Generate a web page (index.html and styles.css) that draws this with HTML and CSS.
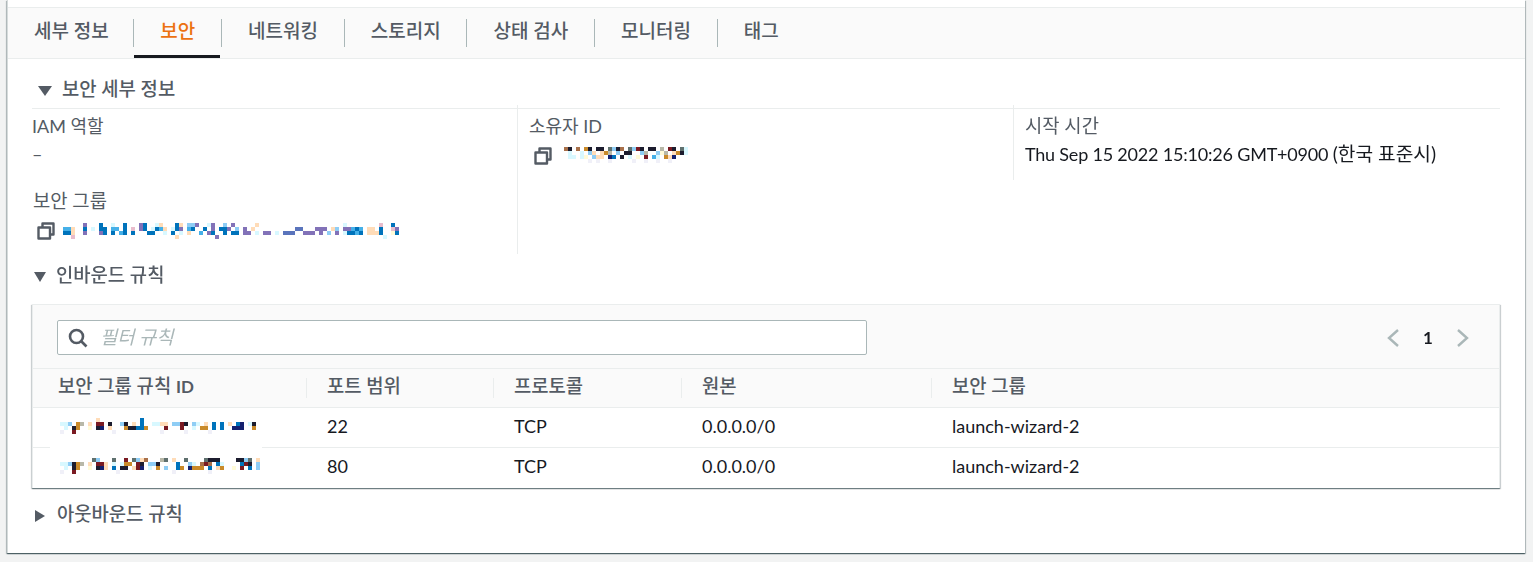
FILE: index.html
```html
<!DOCTYPE html>
<html lang="ko">
<head>
  <meta charset="UTF-8" />
  <title>보안</title>
  <link rel="stylesheet" href="styles.css">
</head>
<body>
  <div class="card">
    <div class="tabs">
      <a class="tab">세부 정보</a>
      <a class="tab active">보안</a>
      <a class="tab">네트워킹</a>
      <a class="tab">스토리지</a>
      <a class="tab">상태 검사</a>
      <a class="tab">모니터링</a>
      <a class="tab">태그</a>
    </div>

    <div class="content">
      <h3 class="section-title first"><span class="arrow down"></span>보안 세부 정보</h3>

      <div class="details">
        <div class="col">
          <div class="label">IAM 역할</div>
          <div class="value dash">–</div>
          <div class="label ko second">보안 그룹</div>
          <div class="value copy-row">
            <svg class="copy" viewBox="0 0 18 18"><path d="M5.5 4.5V1.5h11v11h-3M1.5 5.5h11.500v11h-11.500z"/></svg>
            <canvas class="mosaic" id="sgBlob"></canvas>
          </div>
        </div>
        <div class="col short-divider">
          <div class="label">소유자 ID</div>
          <div class="value copy-row">
            <svg class="copy" viewBox="0 0 18 18"><path d="M5.500 4.500V1.500h11v11h-3M1.500 5.500h11.500v11h-11.500z"/></svg>
            <canvas class="mosaic" id="ownerBlob"></canvas>
          </div>
        </div>
        <div class="col last">
          <div class="label ko">시작 시간</div>
          <div class="value date">Thu Sep 15 2022 15:10:26 GMT+0900 <span class="tz">(한국 표준시)</span></div>
        </div>
      </div>

      <h3 class="section-title inbound"><span class="arrow down"></span>인바운드 규칙</h3>

      <div class="rules">
        <div class="rules-top">
          <div class="filter">
            <svg class="search" viewBox="0 0 20 20"><circle cx="8.5" cy="8.500" r="6.500"/><path d="M13.500 13.500l5 5"/></svg>
            <span class="placeholder">필터 규칙</span>
          </div>
          <div class="pager">
            <svg viewBox="0 0 14 20"><path d="M12 2L3 10l9 8"/></svg>
            <span class="page-num">1</span>
            <svg viewBox="0 0 14 20"><path d="M2 2l9 8-9 8"/></svg>
          </div>
        </div>
        <table>
          <thead>
            <tr>
              <th class="c1"><span>보안 그룹 규칙 <small>ID</small></span></th>
              <th class="c2"><span>포트 범위</span></th>
              <th class="c3"><span>프로토콜</span></th>
              <th class="c4"><span>원본</span></th>
              <th><span>보안 그룹</span></th>
            </tr>
          </thead>
          <tbody>
            <tr>
              <td class="id-cell"><canvas class="mosaic" id="ruleBlob1"></canvas></td>
              <td>22</td>
              <td>TCP</td>
              <td>0.0.0.0/0</td>
              <td>launch-wizard-2</td>
            </tr>
            <tr>
              <td><canvas class="mosaic" id="ruleBlob2"></canvas></td>
              <td>80</td>
              <td>TCP</td>
              <td>0.0.0.0/0</td>
              <td>launch-wizard-2</td>
            </tr>
          </tbody>
        </table>
      </div>

      <h3 class="section-title outbound"><span class="arrow right"></span>아웃바운드 규칙</h3>
    </div>
  </div>

  <script src="script.js"></script>
</body>
</html>
```

FILE: styles.css
```css
* {
  box-sizing: border-box;
}

html, body {
  height: 562px;
  overflow: hidden;
}

body {
  margin: 0;
  padding: 0 8px 0 7px;
  background-color: #f2f3f3;
  font-family: Lato, "Noto Sans CJK KR", sans-serif;
  font-size: 18px;
  color: #16191f;
}

.card {
  height: 553px;
  padding-top: 7px;
  background-color: white;
  border-left: 1px solid #d5dbdb;
  box-shadow: 0 1px 1px 0 rgba(0,28,36,0.5), 1px 1px 1px 0 rgba(0,28,36,0.2), -1px 1px 1px 0 rgba(0,28,36,0.2);
}

.tabs {
  display: flex;
  height: 52px;
  background-color: #fafafa;
  border-top: 1px solid #eaeded;
  border-bottom: 1px solid #eaeded;
}

.tab {
  position: relative;
  padding: 11px 25.8px 0 27px;
  font-size: 19px;
  font-weight: 500;
  line-height: 24px;
  color: #545b64;
}

.tab:first-child {
  padding: 11px 24.5px 0 26px;
}

.tab:not(:last-child)::after {
  content: "";
  position: absolute;
  right: -1px;
  top: 11px;
  height: 28px;
  width: 1px;
  background-color: #aab7b8;
}

.tab.active {
  color: #ec7211;
}

.tab.active::before {
  content: "";
  position: absolute;
  left: 1px;
  right: 1px;
  bottom: 0;
  height: 3px;
  background-color: #16191f;
}

.content {
  padding: 0 25px 0 24px;
}

.section-title {
  display: flex;
  align-items: center;
  margin: 0;
  font-size: 18.8px;
  font-weight: 500;
  line-height: 24px;
  color: #545b64;
}

.section-title.first {
  margin-top: 18px;
  padding-bottom: 7px;
  padding-left: 6px;
  border-bottom: 1px solid #eaeded;
}

.section-title.inbound {
  margin-top: 8px;
  padding-left: 2px;
}

.section-title.outbound {
  margin-top: 14px;
  padding-left: 3px;
}

.arrow {
  width: 0;
  height: 0;
  margin-right: 10px;
}

.arrow.down {
  border-left: 7px solid transparent;
  border-right: 7px solid transparent;
  border-top: 10px solid #545b64;
  margin-top: 4px;
}

.inbound .arrow.down {
  border-left-width: 6.5px;
  border-right-width: 6.5px;
}

.arrow.right {
  border-top: 6.5px solid transparent;
  border-bottom: 6.5px solid transparent;
  border-left: 10px solid #545b64;
  margin-right: 12px;
  margin-top: 4px;
}

.details {
  display: grid;
  grid-template-columns: 486px 496px 1fr;
  height: 146px;
}

.col {
  border-right: 1px solid #eaeded;
  margin: -4px 0 1px;
  padding-top: 9px;
}

.col.short-divider {
  height: 75px;
  padding-left: 11px;
}

.col.last {
  border-right: none;
  padding-left: 11px;
}

.label {
  line-height: 24px;
  color: #545b64;
}

.label.ko {
  font-size: 18.8px;
  padding-left: 1px;
}

.col.last .label.ko {
  padding-left: 0;
}

.value {
  margin-top: 4px;
  line-height: 24px;
}

.value.date {
  letter-spacing: -0.2px;
}

.tz {
  font-size: 19.2px;
  letter-spacing: 0;
}

.value.dash {
  color: #545b64;
  height: 27px;
}

.label.second {
  margin-top: 20px;
}

.value.copy-row {
  display: flex;
  align-items: flex-start;
  height: 24px;
  margin-top: 5px;
  padding-left: 5px;
}

.copy {
  width: 18px;
  height: 18px;
  margin-top: 4px;
  fill: none;
  stroke: #545b64;
  stroke-width: 2.4;
  stroke-linejoin: round;
}

.mosaic {
  display: block;
}

#sgBlob {
  margin: 5px 0 0 4px;
}

#ownerBlob {
  margin: 4px 0 0 12px;
}

.rules {
  width: 1468px;
  height: 184px;
  margin-top: 17px;
  background-color: white;
  border: 1px solid #eaeded;
  border-bottom: none;
  box-shadow: 0 1px 1px 0 rgba(0,28,36,0.4), 1px 1px 1px 0 rgba(0,28,36,0.15), -1px 1px 1px 0 rgba(0,28,36,0.15);
}

.rules-top {
  display: flex;
  justify-content: space-between;
  height: 63px;
  padding: 15px 29px 0 24px;
  background-color: #fafafa;
}

.filter {
  display: flex;
  align-items: center;
  width: 810px;
  height: 35px;
  background-color: white;
  border: 1px solid #aab7b8;
  border-radius: 2px;
}

.search {
  width: 20px;
  height: 20px;
  margin-left: 10px;
  fill: none;
  stroke: #545b64;
  stroke-width: 2.6;
}

.placeholder {
  margin: -4px 0 0 12px;
  font-size: 18.8px;
  font-style: italic;
  color: #aab7b8;
}

.pager {
  display: flex;
  align-items: center;
  height: 35px;
}

.pager svg {
  width: 14px;
  height: 20px;
  fill: none;
  stroke: #aab7b8;
  stroke-width: 2.4;
}

.page-num {
  width: 56px;
  text-align: center;
  font-size: 17px;
  font-weight: 700;
}

table {
  width: 100%;
  table-layout: fixed;
  border-collapse: collapse;
}

th {
  height: 39px;
  padding: 0;
  text-align: left;
  font-size: 18.8px;
  font-weight: 500;
  color: #545b64;
  background-color: #fafafa;
  border-top: 1px solid #eaeded;
  border-bottom: 1px solid #eaeded;
}

th span {
  display: block;
  height: 20px;
  line-height: 16px;
  padding-left: 20px;
  border-left: 1px solid #eaeded;
}

th small {
  font-size: 17px;
  font-weight: 700;
}

th.c1 { width: 273px; }
th.c2 { width: 187px; }
th.c3 { width: 188px; }
th.c4 { width: 250px; }

th.c1 span {
  padding-left: 25px;
  border-left: none;
}

td {
  position: relative;
  height: 40px;
  padding: 0 0 3px 21px;
  color: #16191f;
  border-bottom: 1px solid #eaeded;
}

td:first-child {
  padding-left: 27px;
}

.id-cell::after {
  content: "";
  position: absolute;
  left: 17px;
  bottom: -1px;
  width: 212px;
  height: 2px;
  background-color: white;
}

tbody tr:last-child td {
  border-bottom: none;
}
```

FILE: script.js
```js
// blurred-out ids, one letter per 4px cell
const palette = {
  k: "#1c1c2e", m: "#7a1a22", b: "#0073bb", l: "#8fcdf5", c: "#d8f8ff",
  o: "#c98a2a", p: "#ffdcb8", y: "#fffbd8", n: "#14206e", g: "#5f706e",
  v: "#8272b8", r: "#e8bccc", e: "#f0f0f8", t: "#a8704a", s: "#b8b8a8",
  a: "#45b0e8", d: "#5a74bc"
};

const blobs = {
  ownerBlob: [
    "tk.t.ok.kk.glkt.glmk.kk.s.mk.gc",
    ".c..c.lp.pos.l.kk..ls..lys.pokc",
    ".cc.cy.lpp.nb.k.c.y.m.ac.opn...",
    "......e.e..e.....e..e..e..e...."
  ],
  sgBlob: [
    "......v...b..c..b...vb..cp...bp.llv..cv..l.v.....p.....................c........r..b",
    ".aap..b.c.bb.aa.b.r.vb.cbap.cbv.ab..b.v.bbv.l.v.p..........dd...vvv.pl.vvaba.pp.b..rv",
    ".bbp..v...vb.b.ab.b...bb..c.b.c.p..a.vb..b.bb.vv.c.vv.c.ddd..vvv.v.l.v.cbbab.pppb..yb",
    "...r.........................p.........v.........................................c"
  ],
  ruleBlob1: [
    ".........p..........b.........................",
    "ccl.os.p.mm.k..lk.p.b..ccpp.llmk.lc.p.b.b.p.bn.ck",
    ".c.ko..y.kn.p...okkbbo....m...m..c.oo.b.b..nnn..o",
    "e..m.........e...........e.....e.....e.........."
  ],
  ruleBlob2: [
    "........gl...g..m.glpt...sg.p..g....gkkk....kklg.p",
    "cclkos.p.mmp.c.coo.mk.llk....b..lc.tmt.bc....bmk.l",
    ".c.ko..y.knp.b.kk.pmn.c.o.l..bo.nooo.b.po..y.m.b.l",
    "e..m..........e.............e........e.........."
  ]
};

Object.keys(blobs).forEach(id => {
  const canvas = document.getElementById(id);
  const rows = blobs[id];
  const cols = Math.max(...rows.map(r => r.length));
  canvas.width = cols * 4;
  canvas.height = rows.length * 4;
  const ctx = canvas.getContext("2d");
  rows.forEach((row, y) => {
    [...row].forEach((ch, x) => {
      if (palette[ch]) {
        ctx.fillStyle = palette[ch];
        ctx.fillRect(x * 4, y * 4, 4, 4);
      }
    });
  });
});
```
